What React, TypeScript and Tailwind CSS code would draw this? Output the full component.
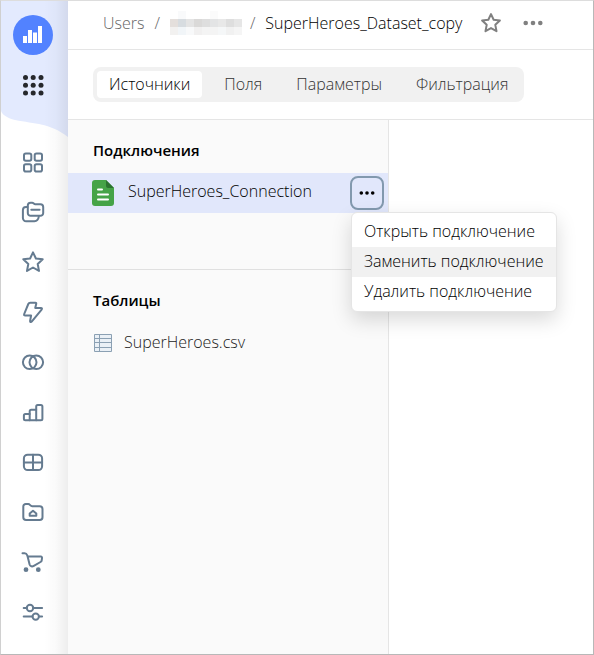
import type { ReactNode } from "react";

const star =
  "M12 2.3l2.9 6.2 6.8.8-5 4.7 1.3 6.9L12 17.5 6 20.9l1.300-6.900-5-4.700 6.800-.8z";

const navItems: { label: string; icon: ReactNode }[] = [
  {
    label: "Коллекции",
    icon: (
      <>
        <rect x="3" y="3.500" width="7.300" height="7.300" rx="1.800" />
        <rect x="13.700" y="3.500" width="7.300" height="7.300" rx="1.800" />
        <rect x="3" y="14.200" width="7.300" height="7.300" rx="1.800" />
        <rect x="13.700" y="14.200" width="7.300" height="7.300" rx="1.800" />
      </>
    ),
  },
  {
    label: "Папки",
    icon: (
      <>
        <path d="M6.800 5.500a2.800 2.800 0 0 1 2.800-2.800h1.600c1.400 0 1.700 1.500 3 1.500h5.200A2.800 2.800 0 0 1 22.200 7v6a2.800 2.800 0 0 1-2.800 2.800H9.600A2.800 2.800 0 0 1 6.800 13z" />
        <path d="M6.500 7.100H5a3.200 3.200 0 0 0-3.100 3.200v7.800a3.200 3.200 0 0 0 3.200 3.200h8.400c2.400 0 3.800-1.700 4.300-4.600M10.300 9.700h8.300" />
      </>
    ),
  },
  { label: "Избранное", icon: <path d={star} /> },
  {
    label: "Подключения",
    icon: (
      <path d="M9.200 2.700h5.200c.8 0 1 .5.800 1.200L14.200 7.900h5.700c1.100 0 1.400.9.700 1.700L10.900 21.400c-.9 1.100-2 .6-1.800-.6l1-5.300H4.200c-1 0-1.400-.5-1-1.500l4.100-10c.4-.9.900-1.300 1.900-1.300z" />
    ),
  },
  {
    label: "Датасеты",
    icon: (
      <>
        <circle cx="8.700" cy="12.300" r="6.800" />
        <circle cx="15.300" cy="12.300" r="6.800" />
      </>
    ),
  },
  {
    label: "Чарты",
    icon: (
      <>
        <path d="M8.700 20.200H4.400A1.500 1.500 0 0 1 2.900 18.700v-3.300a1.500 1.500 0 0 1 1.500-1.500h4.300" />
        <path d="M15.200 20.200H8.700v-9a1.500 1.500 0 0 1 1.500-1.500h5" />
        <path d="M16.700 4.900h3.200a1.500 1.500 0 0 1 1.500 1.500v12.300a1.500 1.500 0 0 1-1.500 1.500h-4.700V6.400a1.500 1.500 0 0 1 1.500-1.500z" />
      </>
    ),
  },
  {
    label: "Дашборды",
    icon: (
      <>
        <rect x="2.900" y="4.700" width="18.200" height="15.400" rx="3.800" />
        <path d="M12 4.700v15.400M2.900 12.400h18.200" />
      </>
    ),
  },
  {
    label: "Личная папка",
    icon: (
      <>
        <path d="M2.300 6.500a2.400 2.400 0 0 1 2.400-2.400h2.600c1.700 0 2 2.200 3.800 2.200h7.600a2.800 2.800 0 0 1 2.800 2.800v8.200a2.800 2.800 0 0 1-2.800 2.800H5.100a2.800 2.800 0 0 1-2.800-2.800z" />
        <path d="M8.700 13.400L12 10.700l3.300 2.700v2.400H8.700z" />
      </>
    ),
  },
  {
    label: "Маркетплейс",
    icon: (
      <>
        <path d="M1.500 3.200h2.100c1.300 0 2.200.8 2.600 2l.4 1.400h13.200c1 0 1.300.5 1.200 1.500l-.3 2.200c-.1.900-.5 1.300-1.200 1.700l-6.700 3.900c-1.700 1-3.600.6-4.200-1.400L6.600 6.600" />
        <circle cx="5" cy="19.700" r="1.400" fill="currentColor" />
        <circle cx="17.300" cy="19.700" r="1.400" fill="currentColor" />
      </>
    ),
  },
  {
    label: "Настройки",
    icon: (
      <>
        <circle cx="9" cy="8" r="3.200" />
        <circle cx="14.700" cy="16.600" r="3.200" />
        <path d="M2.700 8h3.100M12.200 8h8.900M2.700 16.600h8.800M17.900 16.600h3.200" />
      </>
    ),
  },
];

const tabs = ["Источники", "Поля", "Параметры", "Фильтрация"];
const actions = ["Открыть подключение", "Заменить подключение", "Удалить подключение"];
const mosaic = [
  "bg-white", "bg-[#f9fafb]", "bg-white", "bg-white", "bg-white", "bg-[#fbfbfb]", "bg-white", "bg-white", "bg-white",
  "bg-[#e4dfdc]", "bg-[#d7dce0]", "bg-[#e4e4e4]", "bg-[#dad9d8]", "bg-[#dedede]", "bg-[#e3e4e5]", "bg-[#e8e8e8]", "bg-[#dedede]", "bg-[#e6e6e6]",
  "bg-[#f2f1f0]", "bg-[#f1f5f8]", "bg-[#f8f9fa]", "bg-[#f1f0f0]", "bg-[#f4f4f4]", "bg-[#f4f4f4]", "bg-[#f5f7f8]", "bg-[#f1f1f1]", "bg-[#f5f5f5]",
];

function Dots({ size, radius, step }: { size: number; radius: number; step: number }) {
  const c = size / 2;
  return (
    <svg width={size} height={size} fill="currentColor" className="block" aria-hidden="true">
      <circle cx={c - step} cy={c} r={radius} />
      <circle cx={c} cy={c} r={radius} />
      <circle cx={c + step} cy={c} r={radius} />
    </svg>
  );
}

function Sidebar() {
  return (
    <aside className="relative w-[67px] shrink-0 bg-white">
      <svg className="absolute top-0 left-0" width="67" height="137" aria-hidden="true">
        <path d="M0 0H67V136C49 122 34 123 14 119C6 117 0 113 0 109Z" fill="#e3eafe" />
      </svg>
      <div className="absolute inset-y-0 right-0 w-6 bg-linear-to-r from-black/0 via-black/2 to-black/7" />
      <div className="relative flex flex-col items-center pt-3.5 pr-[3px]">
        <a href="#home" aria-label="DataLens">
          <svg width="40" height="40" className="block" aria-hidden="true">
            <circle cx="20" cy="20" r="20" fill="#5282ff" />
            <path d="M10 21h4v7h-4zM15 15h4v13h-4zM20 17.500h4v10.500h-4zM25 11h4v17h-4z" fill="#fff" />
          </svg>
        </a>
        <button type="button" aria-label="Все сервисы" className="mt-[18px] mb-10 text-[#26282c]">
          <svg width="24" height="24" fill="currentColor" className="block" aria-hidden="true">
            {[4.500, 12.200, 20].map((y) =>
              [4.500, 12.200, 20].map((x) => <circle key={`${x}-${y}`} cx={x} cy={y} r="2.500" />),
            )}
          </svg>
        </button>
        <nav className="flex flex-col">
          {navItems.map(({ label, icon }) => (
            <a key={label} href="#nav" aria-label={label} className="flex h-[50px] items-center text-[#657b90]">
              <svg
                width="24"
                height="24"
                viewBox="0 0 24 24"
                fill="none"
                stroke="currentColor"
                strokeWidth="2"
                strokeLinecap="round"
                strokeLinejoin="round"
                aria-hidden="true"
              >
                {icon}
              </svg>
            </a>
          ))}
        </nav>
      </div>
    </aside>
  );
}

function Header() {
  return (
    <header className="flex h-[49px] items-center border-b border-[#e5e5e5] pb-1 pl-[35px]">
      <nav className="flex items-center text-[#666666]">
        <a href="#users">Users</a>
        <span className="mx-2.5">/</span>
        <span className="grid grid-cols-9">
          {mosaic.map((tone, i) => (
            <span key={i} className={`size-2 ${tone}`} />
          ))}
        </span>
        <span className="mr-2.5 ml-2">/</span>
        <span className="text-black">SuperHeroes_Dataset_copy</span>
      </nav>
      <button type="button" aria-label="В избранное" className="ml-[18px] text-[#808080]">
        <svg width="22" height="22" viewBox="0 0 24 24" fill="none" stroke="currentColor" strokeWidth="2.200" strokeLinejoin="round" className="block" aria-hidden="true">
          <path d={star} />
        </svg>
      </button>
      <button type="button" aria-label="Ещё" className="ml-5 text-[#808080]">
        <Dots size={22} radius={2.3} step={7.3} />
      </button>
    </header>
  );
}

export default function App() {
  return (
    <div className="flex min-h-screen border border-t-[#dddddd] border-r-[#b8b8b8] border-b-[#b8b8b8] border-l-[#d0d0d0] bg-white font-['Open_Sans','Noto_Sans',sans-serif] text-[16px] leading-5 font-[350] text-black">
      <Sidebar />
      <div className="flex min-w-0 flex-1 flex-col">
        <Header />
        <div className="flex h-[70px] items-center border-b border-[#e5e5e5] pl-[25px]">
          <div role="tablist" className="flex gap-2.5 rounded-lg bg-[#f1f1f1] p-1">
            {tabs.map((tab, i) => (
              <button
                key={tab}
                type="button"
                role="tab"
                aria-selected={i === 0}
                className={`h-[27px] rounded px-3 pb-0.5 ${i === 0 ? "bg-white text-black" : "text-[#333333]"}`}
              >
                {tab}
              </button>
            ))}
          </div>
        </div>
        <main className="flex flex-1">
          <div className="w-[321px] shrink-0 border-r border-[#e5e5e5] bg-[#fafafa]">
            <section className="h-[150px] border-b border-[#e0e0e0] pt-5">
              <h2 className="pl-[25px] text-[15px] leading-5 font-semibold">Подключения</h2>
              <div className="relative mt-[13px] flex h-10 items-center bg-[#e1e7fb] pr-1 pl-6">
                <svg width="22" height="26" aria-hidden="true">
                  <path d="M3 0H14L22 8V23a3 3 0 0 1-3 3H3a3 3 0 0 1-3-3V3a3 3 0 0 1 3-3z" fill="#45a347" />
                  <path d="M14 0L22 8H16a2 2 0 0 1-2-2z" fill="#2b7330" />
                  <path d="M6 9.500h4M6 14.500h10M6 19.500h10" stroke="#fff" strokeWidth="2" strokeLinecap="round" />
                </svg>
                <span className="ml-3.5 flex-1 pb-1">SuperHeroes_Connection</span>
                <button
                  type="button"
                  aria-label="Действия с подключением"
                  aria-expanded="true"
                  className="flex size-[34px] items-center justify-center rounded-lg border-2 border-[#8299ae]"
                >
                  <Dots size={20} radius={1.8} step={5.7} />
                </button>
                <div
                  role="menu"
                  className="absolute top-[39px] left-[283px] z-10 rounded-md border border-[#e5e5e5] bg-white py-1 shadow-[0_8px_20px_rgba(0,0,0,0.15)]"
                >
                  {actions.map((action, i) => (
                    <button
                      key={action}
                      type="button"
                      role="menuitem"
                      className={`block h-[30px] w-full px-3 pb-0.5 text-left whitespace-nowrap ${i === 1 ? "bg-[#f1f1f1]" : ""}`}
                    >
                      {action}
                    </button>
                  ))}
                </div>
              </div>
            </section>
            <section className="pt-5">
              <h2 className="pl-[25px] text-[15px] leading-5 font-semibold">Таблицы</h2>
              <div className="mt-[13px] flex h-10 items-center pl-[26px]">
                <svg width="18" height="18" fill="none" stroke="#8ba0b3" aria-hidden="true">
                  <path d="M.5.5h17v17H.5z" fill="#eaf0f6" />
                  <path d="M5.500.5v17M.5 4.500h17M.5 8.500h17M.5 13.500h17" />
                </svg>
                <span className="ml-3 pb-0.5 text-[#1a1a1a]">SuperHeroes.csv</span>
              </div>
            </section>
          </div>
        </main>
      </div>
    </div>
  );
}
